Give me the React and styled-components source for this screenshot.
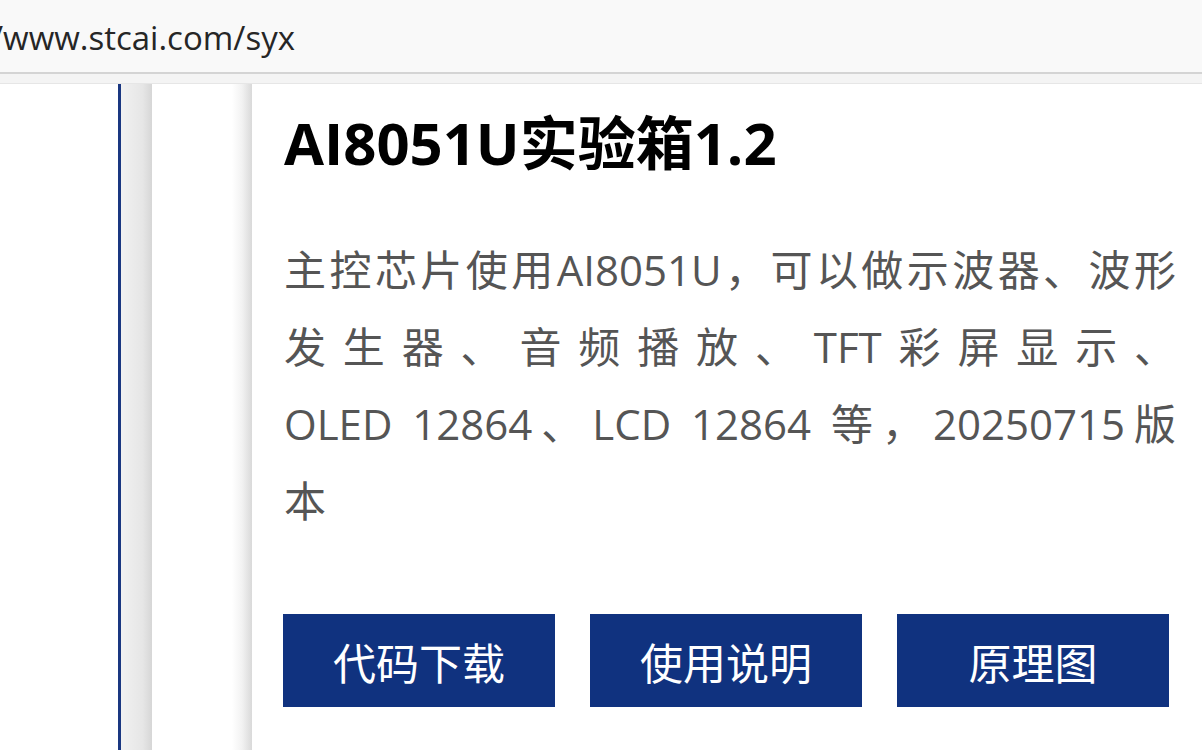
import React from 'react';
import styled, { createGlobalStyle } from 'styled-components';

const GlobalStyle = createGlobalStyle`
  html, body {
    margin: 0;
    padding: 0;
    background: #ffffff;
    overflow: hidden;
  }
  body {
    font-family: "Open Sans", "Noto Sans CJK SC", sans-serif;
  }
`;

const lines = [
  '主控芯片使用AI8051U，可以做示波器、波形',
  '发生器、音频播放、TFT彩屏显示、',
  'OLED 12864、LCD 12864 等，20250715版',
  '本',
];

const buttons = ['代码下载', '使用说明', '原理图'];

const App = () => (
  <>
    <GlobalStyle />
    <AddressBar>
      <Url>/www.stcai.com/syx</Url>
    </AddressBar>
    <TabStrip />
    <Main>
      <Gutter />
      <Rail />
      <Spacer />
      <Card>
        <Title>AI8051U实验箱1.2</Title>
        <Description>
          {lines.map((line, i) => (
            <Line key={line} $last={i === lines.length - 1}>
              {line}
            </Line>
          ))}
        </Description>
        <Actions>
          {buttons.map(label => (
            <ActionButton key={label}>{label}</ActionButton>
          ))}
        </Actions>
      </Card>
    </Main>
  </>
);

const AddressBar = styled.div`
  height: 72px;
  display: flex;
  align-items: center;
  background: #f9f9f9;
  border-bottom: 2px solid #d4d4d4;
  overflow: hidden;
`;

const Url = styled.div`
  font-family: "Open Sans", sans-serif;
  font-size: 33px;
  color: #262626;
  text-indent: -9px;
  padding-top: 2px;
  white-space: nowrap;
`;

const TabStrip = styled.div`
  height: 9px;
  background: #f4f4f4;
  border-bottom: 1px solid #e6e6e6;
`;

const Main = styled.div`
  display: flex;
  height: calc(100vh - 84px);
  overflow: hidden;
`;

const Gutter = styled.div`
  width: 118px;
  flex-shrink: 0;
  background: #ffffff;
`;

const Rail = styled.div`
  width: 31px;
  flex-shrink: 0;
  border-left: 3px solid #1a3781;
  background: linear-gradient(to right, #f1f1f1 0%, #e6e6e6 70%, #d6d6d6 100%);
`;

const Spacer = styled.div`
  width: 100px;
  flex-shrink: 0;
  background: linear-gradient(to right, #ffffff 0%, #ffffff 80%, #f2f2f2 90%, #d9d9d9 100%);
`;

const Card = styled.div`
  flex: 1;
  min-width: 0;
  padding: 19px 26px 0 32px;
  background: #ffffff;
`;

const Title = styled.h1`
  margin: 0;
  font-family: "Open Sans", "Noto Sans CJK SC", sans-serif;
  font-size: 58px;
  font-weight: 700;
  line-height: 80px;
  color: #000000;
`;

const Description = styled.div`
  margin-top: 48px;
  font-family: "Open Sans", "Noto Sans CJK SC", sans-serif;
  font-size: 42px;
  line-height: 77px;
  color: #555555;
`;

const Line = styled.span`
  display: block;
  text-align: ${p => (p.$last ? 'left' : 'justify')};
  text-align-last: ${p => (p.$last ? 'left' : 'justify')};
`;

const Actions = styled.div`
  display: grid;
  grid-template-columns: repeat(3, 272px);
  column-gap: 35px;
  margin-top: 75px;
  margin-left: -1px;
`;

const ActionButton = styled.button`
  height: 93px;
  display: flex;
  align-items: center;
  justify-content: center;
  padding: 0;
  border: none;
  border-radius: 0;
  background: #10327f;
  color: #ffffff;
  font-family: "Noto Sans CJK SC", sans-serif;
  font-size: 43px;
  cursor: pointer;
`;

export default App;
